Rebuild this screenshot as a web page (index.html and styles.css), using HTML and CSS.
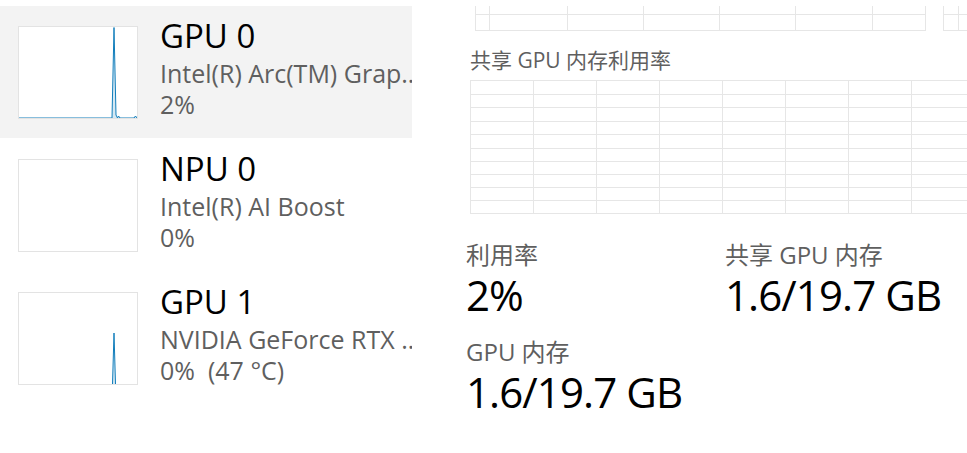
FILE: index.html
```html
<!DOCTYPE html>
<html lang="zh-CN">
<head>
<meta charset="utf-8">
<title>GPU</title>
<link rel="stylesheet" href="styles.css">
</head>
<body>
<div class="app">
  <div class="list">
    <div class="item selected">
      <div class="thumb">
        <svg width="118" height="91" viewBox="0 0 118 91">
          <path class="fill" d="M93 91 L95 0 L97 88 L98.5 91 L99.5 89 L101 91 L115 91 L116.5 89 L118 91 Z"/>
          <path class="line" d="M0 91 L93 91 L95 0.5 L97 88 L98.5 91 L99.5 89 L101 91 L115 91 L116.5 89 L118 91"/>
        </svg>
      </div>
      <div class="info">
        <div class="title">GPU 0</div>
        <div class="sub">Intel(R) Arc(TM) Grap…</div>
        <div class="sub">2%</div>
      </div>
    </div>
    <div class="item">
      <div class="thumb">
        <svg width="118" height="91" viewBox="0 0 118 91"></svg>
      </div>
      <div class="info">
        <div class="title">NPU 0</div>
        <div class="sub">Intel(R) AI Boost</div>
        <div class="sub">0%</div>
      </div>
    </div>
    <div class="item">
      <div class="thumb">
        <svg width="118" height="91" viewBox="0 0 118 91">
          <path class="fill" d="M93.5 91 L95 40 L96.5 91 Z"/>
          <path class="line" d="M93.5 91 L95 40 L96.5 91"/>
        </svg>
      </div>
      <div class="info">
        <div class="title">GPU 1</div>
        <div class="sub">NVIDIA GeForce RTX …</div>
        <div class="sub">0%&nbsp; (47 °C)</div>
      </div>
    </div>
  </div>

  <div class="detail">
    <svg class="top-strip" width="501" height="25" viewBox="0 0 501 25">
      <g class="grid">
        <path d="M9.5 0 V24.5 M23.5 0 V24 M101.5 0 V24 M177.5 0 V24 M253.5 0 V24 M329.5 0 V24 M406.5 0 V24 M459.5 0 V24.5"/>
        <path d="M9 8.5 H460 M9 24.5 H460"/>
        <path d="M477.5 0 V24.5 M492.5 0 V24"/>
        <path d="M477 8.5 H501 M477 24.5 H501"/>
      </g>
    </svg>

    <div class="chart-label">共享 GPU 内存利用率</div>

    <svg class="shared-grid" width="497" height="134" viewBox="0 0 497 134">
      <g class="grid">
        <path d="M0.5 0 V134 M63.5 0 V134 M126.5 0 V134 M189.5 0 V134 M252.5 0 V134 M315.5 0 V134 M378.5 0 V134 M441.5 0 V134"/>
        <path d="M0 0.5 H497 M0 14.5 H497 M0 27.5 H497 M0 41.5 H497 M0 54.5 H497 M0 68.5 H497 M0 81.5 H497 M0 94.5 H497 M0 107.5 H497 M0 120.5 H497 M0 133.5 H497"/>
      </g>
    </svg>

    <div class="stats">
      <div class="stat">
        <div class="stat-label">利用率</div>
        <div class="stat-value">2%</div>
      </div>
      <div class="stat">
        <div class="stat-label">共享 GPU 内存</div>
        <div class="stat-value">1.6/19.7 GB</div>
      </div>
      <div class="stat">
        <div class="stat-label">GPU 内存</div>
        <div class="stat-value">1.6/19.7 GB</div>
      </div>
    </div>
  </div>
</div>
</body>
</html>
```

FILE: styles.css
```css
* {
  box-sizing: border-box;
}

html, body {
  margin: 0;
  padding: 0;
  background: #ffffff;
}

body {
  font-family: "Open Sans", "Noto Sans CJK SC", sans-serif;
  color: #000;
  overflow: hidden;
  width: 967px;
  height: 453px;
}

.app {
  display: flex;
  align-items: flex-start;
  padding-top: 6px;
}

.list {
  width: 412px;
  flex: none;
  display: flex;
  flex-direction: column;
  gap: 1px;
  overflow: hidden;
}

.item {
  display: flex;
  align-items: flex-start;
  height: 132px;
  padding-left: 18px;
}

.item.selected {
  background: #f3f3f3;
}

.thumb {
  flex: none;
  width: 120px;
  height: 93px;
  margin-top: 20px;
  border: 1px solid #e3e3e3;
  background: #fff;
}

.thumb svg {
  display: block;
}

.thumb .fill {
  fill: rgba(17, 125, 187, 0.18);
  stroke: none;
}

.thumb .line {
  fill: none;
  stroke: #117dbb;
  stroke-width: 1;
}

.info {
  width: 252px;
  margin-left: 22px;
  margin-top: 8px;
  min-width: 0;
}

.title {
  font-size: 33px;
  line-height: 44px;
  color: #000;
  white-space: nowrap;
}

.sub {
  font-size: 25px;
  line-height: 31px;
  color: #5f5f5f;
  white-space: nowrap;
  overflow: hidden;
  text-overflow: clip;
}

.detail {
  margin-left: 54px;
  width: 501px;
  flex: none;
  overflow: hidden;
  display: flex;
  flex-direction: column;
}

.detail svg {
  display: block;
  flex: none;
}

.grid path {
  fill: none;
  stroke: #e6e6e6;
  stroke-width: 1;
  shape-rendering: crispEdges;
}

.chart-label {
  margin-top: 15px;
  margin-left: 4px;
  font-size: 21px;
  line-height: 28px;
  color: #5f5f5f;
  white-space: nowrap;
}

.shared-grid {
  margin-top: 6px;
  margin-left: 4px;
}

.stats {
  margin-top: 25px;
  display: grid;
  grid-template-columns: 259px 1fr;
  row-gap: 17px;
}

.stat-label {
  font-size: 24px;
  line-height: 32px;
  color: #5f5f5f;
  white-space: nowrap;
}

.stat-value {
  font-size: 42px;
  line-height: 48px;
  letter-spacing: -0.9px;
  color: #000;
  white-space: nowrap;
}
```
